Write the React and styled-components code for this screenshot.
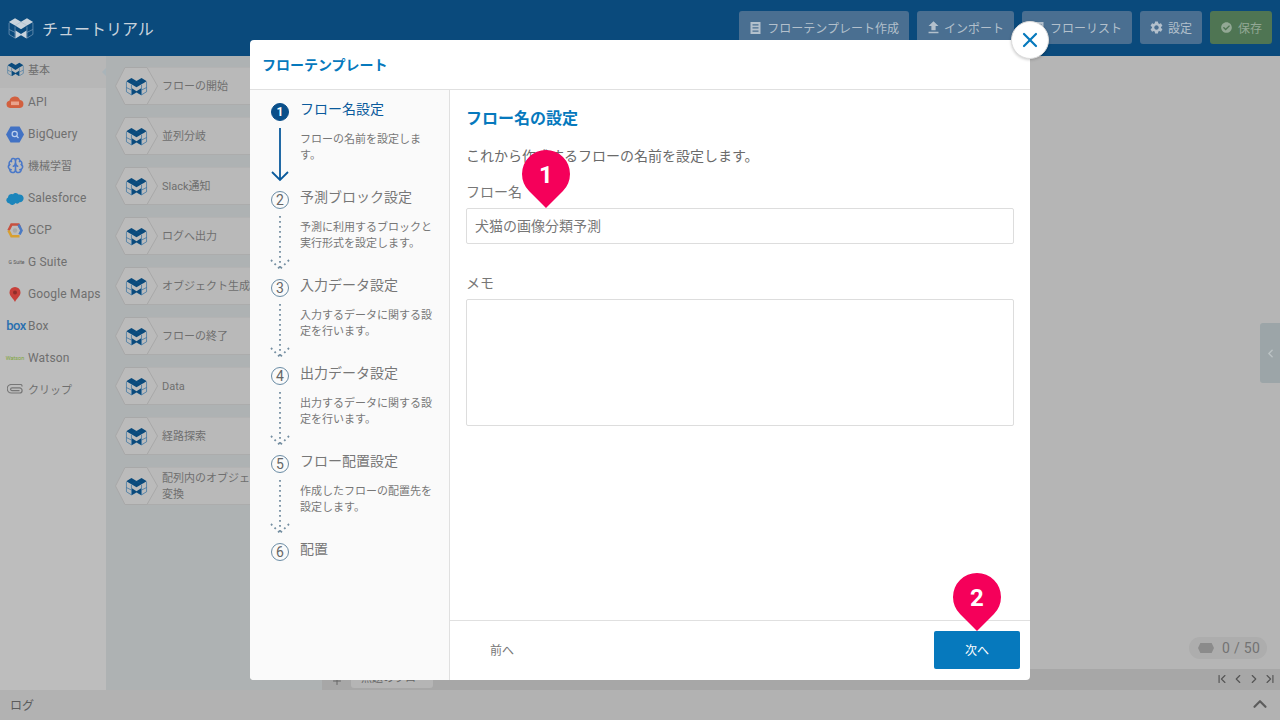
import React from 'react';
import styled, { createGlobalStyle } from 'styled-components';
import { X, Plus, ChevronFirst, ChevronLeft, ChevronRight, ChevronLast, ChevronUp, Brain } from 'lucide-react';
import { MdFileUpload, MdSettings } from 'react-icons/md';
import { FaCheckCircle } from 'react-icons/fa';

const FONT = `Roboto, "Noto Sans CJK JP", "Noto Sans", sans-serif`;

const Global = createGlobalStyle`
  html, body { margin: 0; padding: 0; height: 100%; overflow: hidden; }
  body { font-family: ${FONT}; background: #b5b5b5; }
  * { box-sizing: border-box; }
`;

const Page = styled.div`
  width: 1280px; height: 720px; display: flex; flex-direction: column; position: relative; overflow: hidden;
`;
const Header = styled.header`
  height: 56px; flex: none; background: #0a4a7c; display: flex; align-items: flex-start; padding: 11px 8px 0; gap: 8px;
`;
const Brand = styled.div`
  flex: 1; display: flex; align-items: center; height: 34px; gap: 8px; color: #c9d3dc; font-size: 16px;
`;
const HeadButton = styled.div`
  height: 33px; display: flex; align-items: center; gap: ${p => p.$gap || 6}px; padding: 0 10px 0 11px; border-radius: 3px;
  font-size: 12px; white-space: nowrap;
  background: ${p => (p.$save ? '#4f7553' : '#4a6f91')};
  color: ${p => (p.$save ? '#93a895' : '#b3c0cc')};
  svg { flex: none; }
`;
const UploadGlyph = styled(MdFileUpload)`
  margin: 0 -3px;
`;
const GearGlyph = styled(MdSettings)`
  margin: 0 -2px;
`;
const Main = styled.div`
  flex: 1; display: flex; min-height: 0;
`;
const Sidebar = styled.nav`
  width: 106px; flex: none; background: #bdbdbd;
`;
const SideRow = styled.div`
  height: 32px; display: flex; align-items: center; padding: 0 0 ${p => (p.$latin ? 4 : 6)}px 5px; position: relative;
  background: ${p => (p.$active ? '#b7b7b7' : 'transparent')};
  color: #6f6f6f;
  font-size: ${p => (p.$latin ? '12px' : '11px')};
  letter-spacing: ${p => (p.$latin ? '.17px' : '0')};
  ${p => p.$active && `
    &::after { content: ''; position: absolute; right: 0; top: 12px; border: 4px solid transparent; border-right-color: #a9b4b9; border-left: 0; }
  `}
`;
const SideIcon = styled.span`
  width: 20px; height: 16px; margin-right: 3px; flex: none; display: flex; align-items: center; justify-content: center;
`;
const BoxMark = styled.span`
  font: 500 13px/16px ${FONT}; color: #2a70b0; letter-spacing: -.5px; margin-left: 2px;
`;
const TinyMark = styled.span`
  font: 400 ${p => p.$size}px/16px ${FONT}; color: ${p => p.$color}; white-space: nowrap; letter-spacing: 0;
  margin-left: ${p => p.$shift || 0}px;
`;
const Palette = styled.section`
  width: 216px; flex: none; background: #aeb2b3; padding: 11px 0 0 9px; display: flex; flex-direction: column; gap: 12px;
`;
const Block = styled.div`
  height: 38px; display: flex; flex: none;
`;
const Hex = styled.svg`
  width: 43px; height: 38px; flex: none; position: relative; z-index: 1;
`;
const BlockBody = styled.div`
  flex: 1; margin-left: -11px; padding: 2px 0 0 15px; background: #b9b9b9; border-top: 1px solid #b3b3b3; border-bottom: 1px solid #acacac;
  display: flex; align-items: center; font-size: 11px; line-height: 16px; color: #6f6f6f; white-space: nowrap;
`;
const Canvas = styled.div`
  flex: 1; display: flex; flex-direction: column; min-width: 0;
`;
const Stage = styled.div`
  flex: 1; position: relative; background: #b5b5b5;
`;
const Counter = styled.div`
  position: absolute; right: 13px; bottom: 10px; width: 78px; height: 22px; border-radius: 11px; background: #adadad;
  display: flex; align-items: center; padding-left: 9px; gap: 8px; font-size: 14px; letter-spacing: .3px; color: #737373;
`;
const CounterMark = styled.span`
  width: 16px; height: 10px; background: #8b8b8b; clip-path: polygon(15% 0, 85% 0, 100% 50%, 85% 100%, 15% 100%, 0 50%);
`;
const Handle = styled.div`
  position: absolute; right: 0; top: 267px; width: 20px; height: 60px; background: #9ca5a8; border-radius: 3px 0 0 3px;
  display: flex; align-items: center; justify-content: center; color: #bcc3c5;
`;
const TabBar = styled.div`
  height: 21px; flex: none; background: #a7a7a7; display: flex; align-items: flex-start; position: relative;
`;
const AddTab = styled.span`
  width: 29px; height: 21px; display: flex; align-items: center; justify-content: center; padding-top: 2px; color: #666;
`;
const Tab = styled.div`
  width: 82px; height: 19px; background: #b5b5b5; border-radius: 0 0 3px 3px; font-size: 11px; line-height: 20px; padding-left: 10px; color: #666; white-space: nowrap;
`;
const Pager = styled.div`
  margin-left: auto; display: flex; gap: 2px; padding: 3px 3px 0 0; color: #555;
`;
const LogBar = styled.footer`
  height: 30px; flex: none; background: #b2b2b2; display: flex; align-items: center; justify-content: space-between;
  padding: 0 9px 2px 10px; font-size: 12px; color: #5c5c5c;
`;
const Overlay = styled.div`
  position: absolute; inset: 0; display: flex; justify-content: center; align-items: flex-start; padding-top: 40px;
`;
const Modal = styled.div`
  width: 780px; height: 640px; background: #fff; border-radius: 4px; display: flex; flex-direction: column; position: relative;
`;
const Close = styled.div`
  position: absolute; right: -19px; top: -19px; width: 38px; height: 38px; border-radius: 50%; background: #fff;
  border: 1px solid #ddd; box-shadow: 0 1px 3px rgba(0,0,0,.2); display: flex; align-items: center; justify-content: center; color: #0679bd;
`;
const ModalHead = styled.div`
  height: 50px; flex: none; display: flex; align-items: center; padding: 0 0 2px 12px; border-bottom: 1px solid #e0e0e0;
  font-size: 14px; font-weight: 700; color: #0679bd;
`;
const ModalBody = styled.div`
  flex: 1; display: flex; min-height: 0;
`;
const Steps = styled.div`
  width: 200px; flex: none; background: #fafafa; border-right: 1px solid #e0e0e0; border-radius: 0 0 0 4px; padding: 10px 15px 0 21px;
`;
const Step = styled.div`
  height: 88px; display: grid; grid-template-columns: 18px 1fr; column-gap: 11px;
`;
const Marker = styled.div`
  display: flex; flex-direction: column; align-items: center; padding-top: 3px;
  svg { overflow: visible; margin-top: 7px; flex: none; }
`;
const Num = styled.span`
  width: 18px; height: 18px; flex: none; border-radius: 50%; display: flex; align-items: center; justify-content: center;
  font-size: ${p => (p.$on ? '12px' : '14px')}; font-weight: ${p => (p.$on ? 700 : 400)};
  border: 1px solid ${p => (p.$on ? '#0a4f8a' : '#6a8ca5')};
  background: ${p => (p.$on ? '#0a4f8a' : 'transparent')};
  color: ${p => (p.$on ? '#fff' : '#666')};
`;
const StepTitle = styled.div`
  font-size: 14px; line-height: 20px; margin-top: -1px; color: ${p => (p.$on ? '#0a5a9c' : '#777')};
`;
const StepDesc = styled.div`
  font-size: 11px; line-height: 16.5px; margin-top: 12.5px; color: #777;
`;
const Pane = styled.div`
  flex: 1; display: flex; flex-direction: column; min-width: 0;
`;
const PaneContent = styled.div`
  flex: 1; padding: 17px 16px 0;
`;
const PaneTitle = styled.h2`
  margin: 0; font-size: 16px; line-height: 24px; font-weight: 700; color: #0679bd;
`;
const Lead = styled.p`
  margin: 15px 0 0; font-size: 14px; line-height: 20px; color: #6a6a6a;
`;
const Field = styled.div`
  position: relative; margin-top: ${p => p.$gap}px;
`;
const Label = styled.label`
  display: block; font-size: 14px; line-height: 20px; color: #777; margin-bottom: 6px;
`;
const TextInput = styled.input`
  display: block; width: 100%; height: 36px; border: 1px solid #ddd; border-radius: 2px; padding: 0 8px 2px;
  font: 14px ${FONT}; color: #777; background: #fff; outline: none;
`;
const TextArea = styled.textarea`
  display: block; width: 100%; height: 127px; border: 1px solid #ddd; border-radius: 2px; padding: 8px;
  font: 14px ${FONT}; color: #777; background: #fff; outline: none; resize: none;
`;
const PaneFoot = styled.div`
  height: 60px; flex: none; border-top: 1px solid #e0e0e0; display: flex; align-items: center; justify-content: space-between; padding: 0 10px 1px;
`;
const FootButton = styled.div`
  width: 86px; height: 38px; position: relative; border-radius: 2px; display: flex; align-items: center; justify-content: center; font-size: 12px;
  padding-bottom: 2px;
  padding-right: ${p => (p.$primary ? 0 : 2)}px;
  background: ${p => (p.$primary ? '#0679bd' : 'transparent')};
  color: ${p => (p.$primary ? '#fff' : '#777')};
`;
const Pin = styled.div`
  position: absolute; width: 48px; height: 48px; left: ${p => p.$left}px; top: ${p => p.$top}px;
  background: #f5005a; border-radius: 50% 50% 0 50%; transform: rotate(45deg);
  display: flex; align-items: center; justify-content: center;
`;
const PinNum = styled.span`
  transform: rotate(-45deg) translateY(1px); color: #fff; font-size: 24px; font-weight: 700; line-height: 1;
`;

const Logo = ({ fill, line, size = 22 }) => (
  <svg width={size} height={size * 0.88} viewBox="0 0 26 23" fill="none">
    <path d="M1 6v11.5l6 3.7 6-3.2 6 3.2 6-3.7V6M7 9.5v11.7M19 9.5v11.7M1 12.5l6 3M25 12.5l-6 3" stroke={line} strokeWidth=".8" />
    <path d="M.8 5 7 1.2 13 4.8 19 1.2 25.2 5 19 8.6 13 12.2 7 8.6Z" fill={fill} />
    <path d="M7 8.7 13 5l6 3.7" stroke={line} strokeWidth=".5" opacity=".5" />
    <path d="M7.5 13.5 13 17l5.5-3.5v8L13 18l-5.5 3.5Z" fill={fill} />
  </svg>
);

const HexBlock = () => (
  <Hex viewBox="0 0 43 38">
    <path d="M.5 19 10 .5h22L42.5 19 32 37.5H10Z" fill="#bbb" stroke="#a8a8a8" />
    <g transform="translate(10.5 10)"><Logo fill="#0a4a7c" line="#2a6c9f" /></g>
  </Hex>
);

const icons = {
  base: <Logo fill="#0a4a7c" line="#2a6c9f" size={17} />,
  api: (
    <svg width="18" height="12" viewBox="0 0 18 12">
      <path d="M4 12a3.7 3.7 0 0 1-.6-7.3A5.6 5.6 0 0 1 14 3.9 4.1 4.1 0 0 1 14 12Z" fill="#d2603f" />
      <rect x="5" y="5.5" width="8" height="3.6" fill="#e9a38c" />
    </svg>
  ),
  bq: (
    <svg width="18" height="17" viewBox="0 0 18 17">
      <path d="M0 8.5 4.5.5h9L18 8.5l-4.5 8h-9Z" fill="#4272c4" />
      <circle cx="8.7" cy="8" r="2.6" fill="none" stroke="#bcd0ee" strokeWidth="1.2" />
      <path d="m10.5 10 2 2" stroke="#bcd0ee" strokeWidth="1.2" />
    </svg>
  ),
  brain: <Brain size={17} color="#4a78c8" strokeWidth={2.2} />,
  sf: (
    <svg width="18" height="13" viewBox="0 0 18 13">
      <path d="M3.5 11.5A3.2 3.2 0 0 1 2 5.5a3.5 3.5 0 0 1 5-3.2 3.5 3.5 0 0 1 5.5.3 3.9 3.9 0 1 1 1 7.6 3 3 0 0 1-4 .9 3.5 3.5 0 0 1-6 .4Z" fill="#1b85bb" />
    </svg>
  ),
  gcp: (
    <svg width="16" height="15" viewBox="0 0 16 15" fill="none" strokeWidth="2.6">
      <path d="M1.5 7.5 4.5 1.5h7l1.5 3" stroke="#c8503f" />
      <path d="M11.5 1.5l3 6-2 4" stroke="#4a7ac4" />
      <path d="M12.5 13.3h-8l-3-5.8" stroke="#d8a030" />
      <circle cx="8" cy="7.5" r="2.2" fill="#a9a9a9" stroke="none" />
    </svg>
  ),
  gs: <TinyMark $size={5} $color="#555" $shift={3}>G Suite</TinyMark>,
  map: (
    <svg width="12" height="15" viewBox="0 0 12 15">
      <path d="M6 15C4 11 .5 9 .5 5.5a5.5 5.5 0 0 1 11 0C11.5 9 8 11 6 15Z" fill="#c7403a" />
      <circle cx="6" cy="5.5" r="2" fill="#8f2e2a" />
    </svg>
  ),
  box: <BoxMark>box</BoxMark>,
  watson: <TinyMark $size={5.5} $color="#7ea53a">Watson</TinyMark>,
  clip: (
    <svg width="16" height="10" viewBox="0 0 16 10" fill="none" stroke="#777" strokeWidth="1.2">
      <path d="M15 2.5V2A1.5 1.5 0 0 0 13.5.5h-9a4 4 0 0 0 0 8.5h8a2.6 2.6 0 0 0 0-5.2H5a1.4 1.4 0 0 0 0 2.8h7.5" />
    </svg>
  ),
};

const sideItems = [
  ['base', '基本', false],
  ['api', 'API', true],
  ['bq', 'BigQuery', true],
  ['brain', '機械学習', false],
  ['sf', 'Salesforce', true],
  ['gcp', 'GCP', true],
  ['gs', 'G Suite', true],
  ['map', 'Google Maps', true],
  ['box', 'Box', true],
  ['watson', 'Watson', true],
  ['clip', 'クリップ', false],
];

const blocks = [
  'フローの開始', '並列分岐', 'Slack通知', 'ログへ出力', 'オブジェクト生成', 'フローの終了', 'Data', '経路探索',
];

const stepItems = [
  ['フロー名設定', 'フローの名前を設定します。'],
  ['予測ブロック設定', '予測に利用するブロックと実行形式を設定します。'],
  ['入力データ設定', '入力するデータに関する設定を行います。'],
  ['出力データ設定', '出力するデータに関する設定を行います。'],
  ['フロー配置設定', '作成したフローの配置先を設定します。'],
  ['配置', ''],
];

const SolidArrow = () => (
  <svg width="18" height="53" viewBox="0 0 18 53" fill="none" stroke="#0a5a9c" strokeWidth="1.8">
    <path d="M9 0v52M1 44l8 8 8-8" />
  </svg>
);
const DottedArrow = () => (
  <svg width="18" height="53" viewBox="0 0 18 53" fill="none" stroke="#748ea1" strokeWidth="1.8" strokeDasharray="1.8 3.2">
    <path d="M9 0v53M0 44l9 9M18 44l-9 9" />
  </svg>
);

const ListIcon = () => (
  <svg width="11" height="12" viewBox="0 0 11 12">
    <path d="M.5 0h10v12H.5Zm2 2.2v1.3h6V2.2Zm0 3.1v1.3h6V5.3Zm0 3.1v1.3h6V8.4Z" fill="currentColor" fillRule="evenodd" />
  </svg>
);

export default function App() {
  return (
    <Page>
      <Global />
      <Header>
        <Brand>
          <Logo fill="#c9d3dc" line="#6f93b3" size={26} />
          チュートリアル
        </Brand>
        <HeadButton><ListIcon />フローテンプレート作成</HeadButton>
        <HeadButton $gap={5}><UploadGlyph size={17} />インポート</HeadButton>
        <HeadButton><ListIcon />フローリスト</HeadButton>
        <HeadButton><GearGlyph size={15} />設定</HeadButton>
        <HeadButton $save><FaCheckCircle size={11} />保存</HeadButton>
      </Header>
      <Main>
        <Sidebar>
          {sideItems.map(([k, label, latin], i) => (
            <SideRow key={k} $active={i === 0} $latin={latin}>
              <SideIcon>{icons[k]}</SideIcon>
              {label}
            </SideRow>
          ))}
        </Sidebar>
        <Palette>
          {blocks.map(b => (
            <Block key={b}><HexBlock /><BlockBody>{b}</BlockBody></Block>
          ))}
          <Block><HexBlock /><BlockBody><span>配列内のオブジェクトを<br />変換</span></BlockBody></Block>
        </Palette>
        <Canvas>
          <Stage>
            <Counter><CounterMark />0 / 50</Counter>
            <Handle><ChevronLeft size={13} strokeWidth={2.6} /></Handle>
          </Stage>
          <TabBar>
            <AddTab><Plus size={12} /></AddTab>
            <Tab>無題のフロー</Tab>
            <Pager>
              <ChevronFirst size={14} />
              <ChevronLeft size={14} />
              <ChevronRight size={14} />
              <ChevronLast size={14} />
            </Pager>
          </TabBar>
        </Canvas>
      </Main>
      <LogBar>ログ<ChevronUp size={22} strokeWidth={2.4} /></LogBar>
      <Overlay>
        <Modal>
          <Close><X size={24} strokeWidth={2.2} /></Close>
          <ModalHead>フローテンプレート</ModalHead>
          <ModalBody>
            <Steps>
              {stepItems.map(([t, d], i) => (
                <Step key={t}>
                  <Marker>
                    <Num $on={i === 0}>{i + 1}</Num>
                    {i === 0 && <SolidArrow />}
                    {i > 0 && i < 5 && <DottedArrow />}
                  </Marker>
                  <div>
                    <StepTitle $on={i === 0}>{t}</StepTitle>
                    {d && <StepDesc>{d}</StepDesc>}
                  </div>
                </Step>
              ))}
            </Steps>
            <Pane>
              <PaneContent>
                <PaneTitle>フロー名の設定</PaneTitle>
                <Lead>これから作成するフローの名前を設定します。</Lead>
                <Field $gap={16}>
                  <Label>フロー名</Label>
                  <TextInput readOnly value="犬猫の画像分類予測" />
                  <Pin $left={56} $top={-32}><PinNum>1</PinNum></Pin>
                </Field>
                <Field $gap={29}>
                  <Label>メモ</Label>
                  <TextArea readOnly />
                </Field>
              </PaneContent>
              <PaneFoot>
                <FootButton>前へ</FootButton>
                <FootButton $primary>
                  次へ
                  <Pin $left={19} $top={-58}><PinNum>2</PinNum></Pin>
                </FootButton>
              </PaneFoot>
            </Pane>
          </ModalBody>
        </Modal>
      </Overlay>
    </Page>
  );
}
